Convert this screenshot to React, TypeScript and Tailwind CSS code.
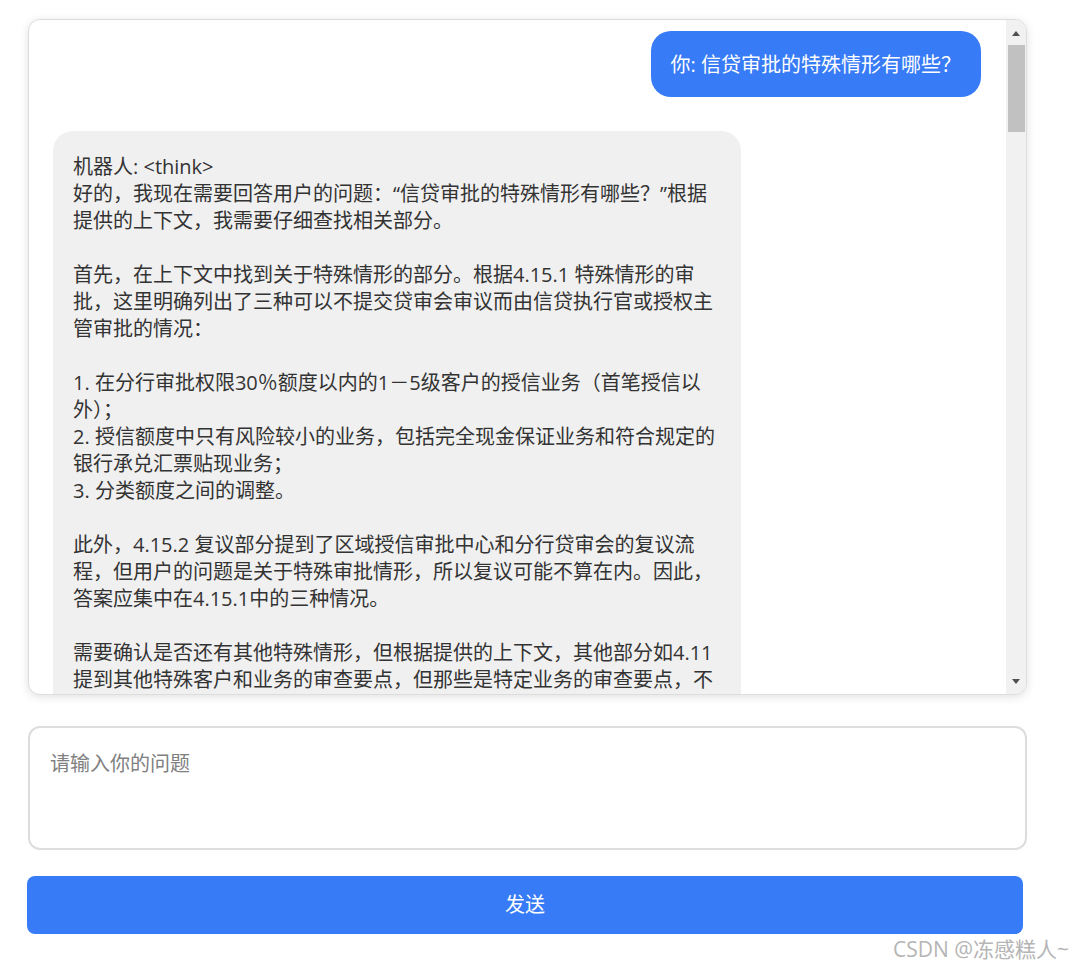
import React from 'react';

const FONT = '"Open Sans", "Noto Sans CJK SC", sans-serif';

const BOT_LINES = [
  '机器人: <think>',
  '好的，我现在需要回答用户的问题：“信贷审批的特殊情形有哪些？”根据',
  '提供的上下文，我需要仔细查找相关部分。',
  '',
  '首先，在上下文中找到关于特殊情形的部分。根据4.15.1 特殊情形的审',
  '批，这里明确列出了三种可以不提交贷审会审议而由信贷执行官或授权主',
  '管审批的情况：',
  '',
  '1. 在分行审批权限30％额度以内的1－5级客户的授信业务（首笔授信以',
  '外）；',
  '2. 授信额度中只有风险较小的业务，包括完全现金保证业务和符合规定的',
  '银行承兑汇票贴现业务；',
  '3. 分类额度之间的调整。',
  '',
  '此外，4.15.2 复议部分提到了区域授信审批中心和分行贷审会的复议流',
  '程，但用户的问题是关于特殊审批情形，所以复议可能不算在内。因此，',
  '答案应集中在4.15.1中的三种情况。',
  '',
  '需要确认是否还有其他特殊情形，但根据提供的上下文，其他部分如4.11',
  '提到其他特殊客户和业务的审查要点，但那些是特定业务的审查要点，不',
];

function Scrollbar() {
  return (
    <div className="w-5 shrink-0 bg-[#f1f1f1] flex flex-col items-center">
      <div className="h-[24px] w-full flex items-center justify-center pt-[2px]">
        <div className="w-0 h-0 border-x-[4px] border-x-transparent border-b-[5px] border-b-[#505050]" />
      </div>
      <div className="h-[87px] w-[17px] mt-[1px] bg-[#c1c1c1]" />
      <div className="flex-1" />
      <div className="h-[24px] w-full flex items-center justify-center pb-[2px]">
        <div className="w-0 h-0 border-x-[4px] border-x-transparent border-t-[5px] border-t-[#505050]" />
      </div>
    </div>
  );
}

export default function App() {
  return (
    <div className="min-h-screen bg-white pl-[28px] pt-[19px]" style={{ fontFamily: FONT }}>
      <div className="w-[999px] h-[676px] flex rounded-xl border border-[#dddddd] bg-white overflow-hidden shadow-[0_2px_10px_rgba(0,0,0,0.12)]">
        <div className="flex-1 overflow-hidden pt-[11px] pl-6 pr-[25px] flex flex-col">
          <div className="self-end rounded-[20px] bg-[#377bf6] text-white text-[20px] leading-[27px] px-5 pt-[20px] pb-[19px]">
            你: 信贷审批的特殊情形有哪些？
          </div>
          <div className="mt-[34px] w-[688px] shrink-0 rounded-[20px] bg-[#f0f0f0] text-[#333333] text-[20px] leading-[27px] px-5 pt-[22px] pb-10">
            {BOT_LINES.map((line, i) => (
              <div key={i} className="whitespace-pre h-[27px]">
                {line}
              </div>
            ))}
          </div>
        </div>
        <Scrollbar />
      </div>

      <textarea
        placeholder="请输入你的问题"
        className="mt-[31px] block w-[999px] h-[124px] resize-none rounded-xl border-2 border-[#dddddd] px-5 pt-[22px] pb-5 text-[20px] leading-[27px] text-[#333333] placeholder:text-[#808080] outline-none"
        style={{ fontFamily: FONT }}
      />

      <button
        type="button"
        className="mt-[26px] -ml-px block w-[996px] h-[58px] rounded-lg bg-[#377bf6] text-white text-[20px]"
        style={{ fontFamily: FONT }}
      >
        发送
      </button>

      <div className="w-[1041px] flex justify-end mt-[1px] text-[21px] leading-[28px] text-[#b5b5b5]">
        CSDN @冻感糕人~
      </div>
    </div>
  );
}
